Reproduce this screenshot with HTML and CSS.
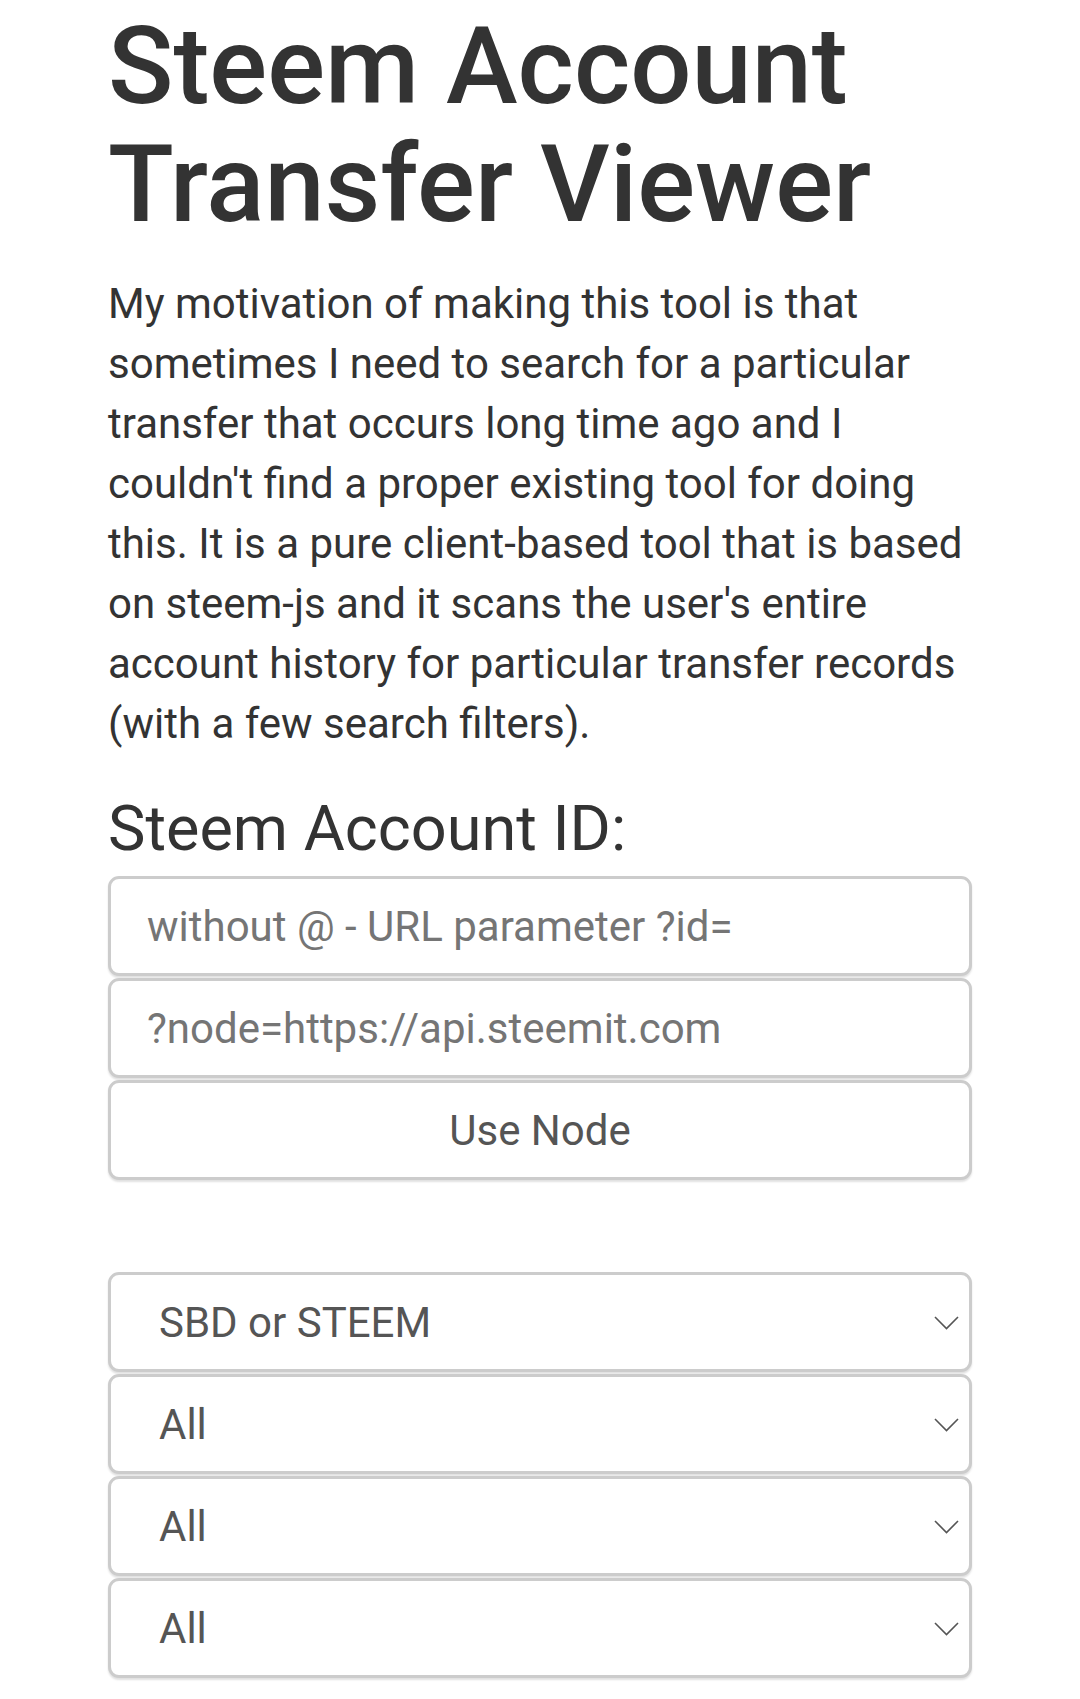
FILE: index.html
```html
<!DOCTYPE html>
<html lang="en">
<head>
<meta charset="utf-8">
<title>Steem Account Transfer Viewer</title>
<link rel="stylesheet" href="styles.css">
</head>
<body>
<main class="page">
  <h1 class="title">Steem Account Transfer Viewer</h1>
  <p class="intro">My motivation of making this tool is that sometimes I need to search for a particular transfer that occurs long time ago and I couldn't find a proper existing tool for doing this. It is a pure client-based tool that is based on steem-js and it scans the user's entire account history for particular transfer records (with a few search filters).</p>
  <h2 class="label">Steem Account ID:</h2>
  <div class="fields">
    <input class="field" type="text" placeholder="without @ - URL parameter ?id=">
    <input class="field" type="text" placeholder="?node=https://api.steemit.com">
    <button class="field btn" type="button">Use Node</button>
  </div>
  <div class="filters">
    <div class="select-wrap">
      <select class="field sel"><option>SBD or STEEM</option></select>
      <svg class="chev" width="25" height="14" viewBox="0 0 25 14"><path d="M1 1 L12.5 12.5 L24 1" fill="none" stroke="#555" stroke-width="1.6"/></svg>
    </div>
    <div class="select-wrap">
      <select class="field sel"><option>All</option></select>
      <svg class="chev" width="25" height="14" viewBox="0 0 25 14"><path d="M1 1 L12.5 12.5 L24 1" fill="none" stroke="#555" stroke-width="1.6"/></svg>
    </div>
    <div class="select-wrap">
      <select class="field sel"><option>All</option></select>
      <svg class="chev" width="25" height="14" viewBox="0 0 25 14"><path d="M1 1 L12.5 12.5 L24 1" fill="none" stroke="#555" stroke-width="1.6"/></svg>
    </div>
    <div class="select-wrap">
      <select class="field sel"><option>All</option></select>
      <svg class="chev" width="25" height="14" viewBox="0 0 25 14"><path d="M1 1 L12.5 12.5 L24 1" fill="none" stroke="#555" stroke-width="1.6"/></svg>
    </div>
  </div>
</main>
</body>
</html>
```
FILE: styles.css
```css
html, body {
  margin: 0;
  padding: 0;
  background: #fff;
}
body {
  font-family: Roboto, "Noto Sans", Arial, sans-serif;
  color: #333;
}
.page {
  padding: 7px 108px 20px 108px;
}
.title {
  margin: 0;
  font-size: 108px;
  line-height: 118px;
  font-weight: 500;
  color: #333;
}
.intro {
  margin: 31px 0 0 0;
  font-size: 42px;
  line-height: 60px;
  color: #333;
}
.label {
  margin: 42px 0 0 0;
  font-size: 63px;
  line-height: 65px;
  font-weight: 400;
  color: #333;
}
.fields {
  margin-top: 15px;
  display: flex;
  flex-direction: column;
  gap: 2px;
}
.field {
  box-sizing: border-box;
  display: block;
  width: 100%;
  height: 100px;
  margin: 0;
  border: 3px solid #ccc;
  border-radius: 11px;
  background: #fff;
  box-shadow: 0 2px 2px rgba(0, 0, 0, 0.12);
  font-family: Roboto, "Noto Sans", Arial, sans-serif;
  outline: none;
}
input.field {
  padding: 0 36px;
  font-size: 42px;
  color: #555;
}
input.field::placeholder {
  color: #757575;
}
.btn {
  font-size: 42px;
  color: #555;
  text-align: center;
  padding: 0;
}
.filters {
  margin-top: 92px;
  display: flex;
  flex-direction: column;
  gap: 2px;
}
.select-wrap {
  position: relative;
}
.sel {
  -webkit-appearance: none;
  appearance: none;
  padding: 0 60px 0 48px;
  font-size: 42px;
  color: #555;
}
.chev {
  position: absolute;
  right: 13px;
  top: 44px;
  pointer-events: none;
}
```
